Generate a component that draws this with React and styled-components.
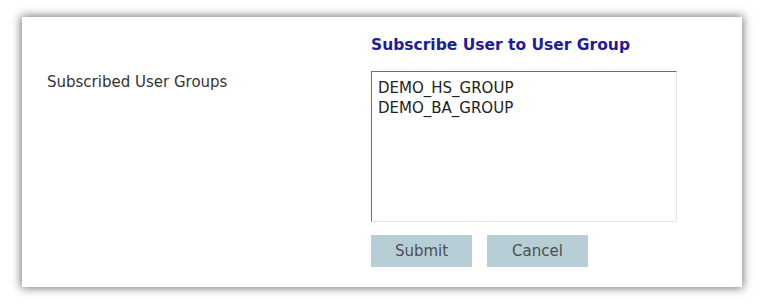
import React from "react";
import styled, { createGlobalStyle } from "styled-components";

const Global = createGlobalStyle`
  html, body { margin: 0; padding: 0; background: #ffffff; }
  body { font-family: "DejaVu Sans", Verdana, sans-serif; }
`;

const Page = styled.div`
  width: 765px;
  height: 306px;
  padding: 17px 0 0 22px;
  box-sizing: border-box;
`;

const Panel = styled.div`
  width: 720px;
  height: 270px;
  box-sizing: border-box;
  background: #ffffff;
  box-shadow: 0 0 9px 1px rgba(0, 0, 0, 0.55);
  display: grid;
  grid-template-columns: 324px 306px;
  align-content: start;
  padding: 18px 0 0 25px;
`;

const Title = styled.h2`
  grid-column: 2;
  margin: 0 0 16px 0;
  font-size: 15.5px;
  font-weight: bold;
  color: #1c1c9c;
  line-height: 20px;
  white-space: nowrap;
`;

const Label = styled.div`
  grid-column: 1;
  font-size: 15px;
  color: #333333;
  line-height: 19px;
  padding-top: 2px;
`;

const ListBox = styled.div`
  grid-column: 2;
  height: 151px;
  box-sizing: border-box;
  border-top: 1px solid #6f6f6f;
  border-left: 1px solid #6f6f6f;
  border-right: 1px solid #e6e6e6;
  border-bottom: 1px solid #e6e6e6;
  padding: 6px 6px;
`;

const Option = styled.div`
  font-size: 15px;
  line-height: 20px;
  color: #222222;
`;

const Buttons = styled.div`
  grid-column: 2;
  display: flex;
  gap: 15px;
  margin-top: 13px;
`;

const Button = styled.button`
  width: 101px;
  height: 32px;
  border: none;
  background: #b8ced6;
  color: #4a4f53;
  font-family: "DejaVu Sans", Verdana, sans-serif;
  font-size: 15px;
  padding: 0;
`;

export default function App() {
  return (
    <>
      <Global />
      <Page>
        <Panel>
          <Title>Subscribe User to User Group</Title>
          <Label>Subscribed User Groups</Label>
          <ListBox>
            <Option>DEMO_HS_GROUP</Option>
            <Option>DEMO_BA_GROUP</Option>
          </ListBox>
          <Buttons>
            <Button>Submit</Button>
            <Button>Cancel</Button>
          </Buttons>
        </Panel>
      </Page>
    </>
  );
}
